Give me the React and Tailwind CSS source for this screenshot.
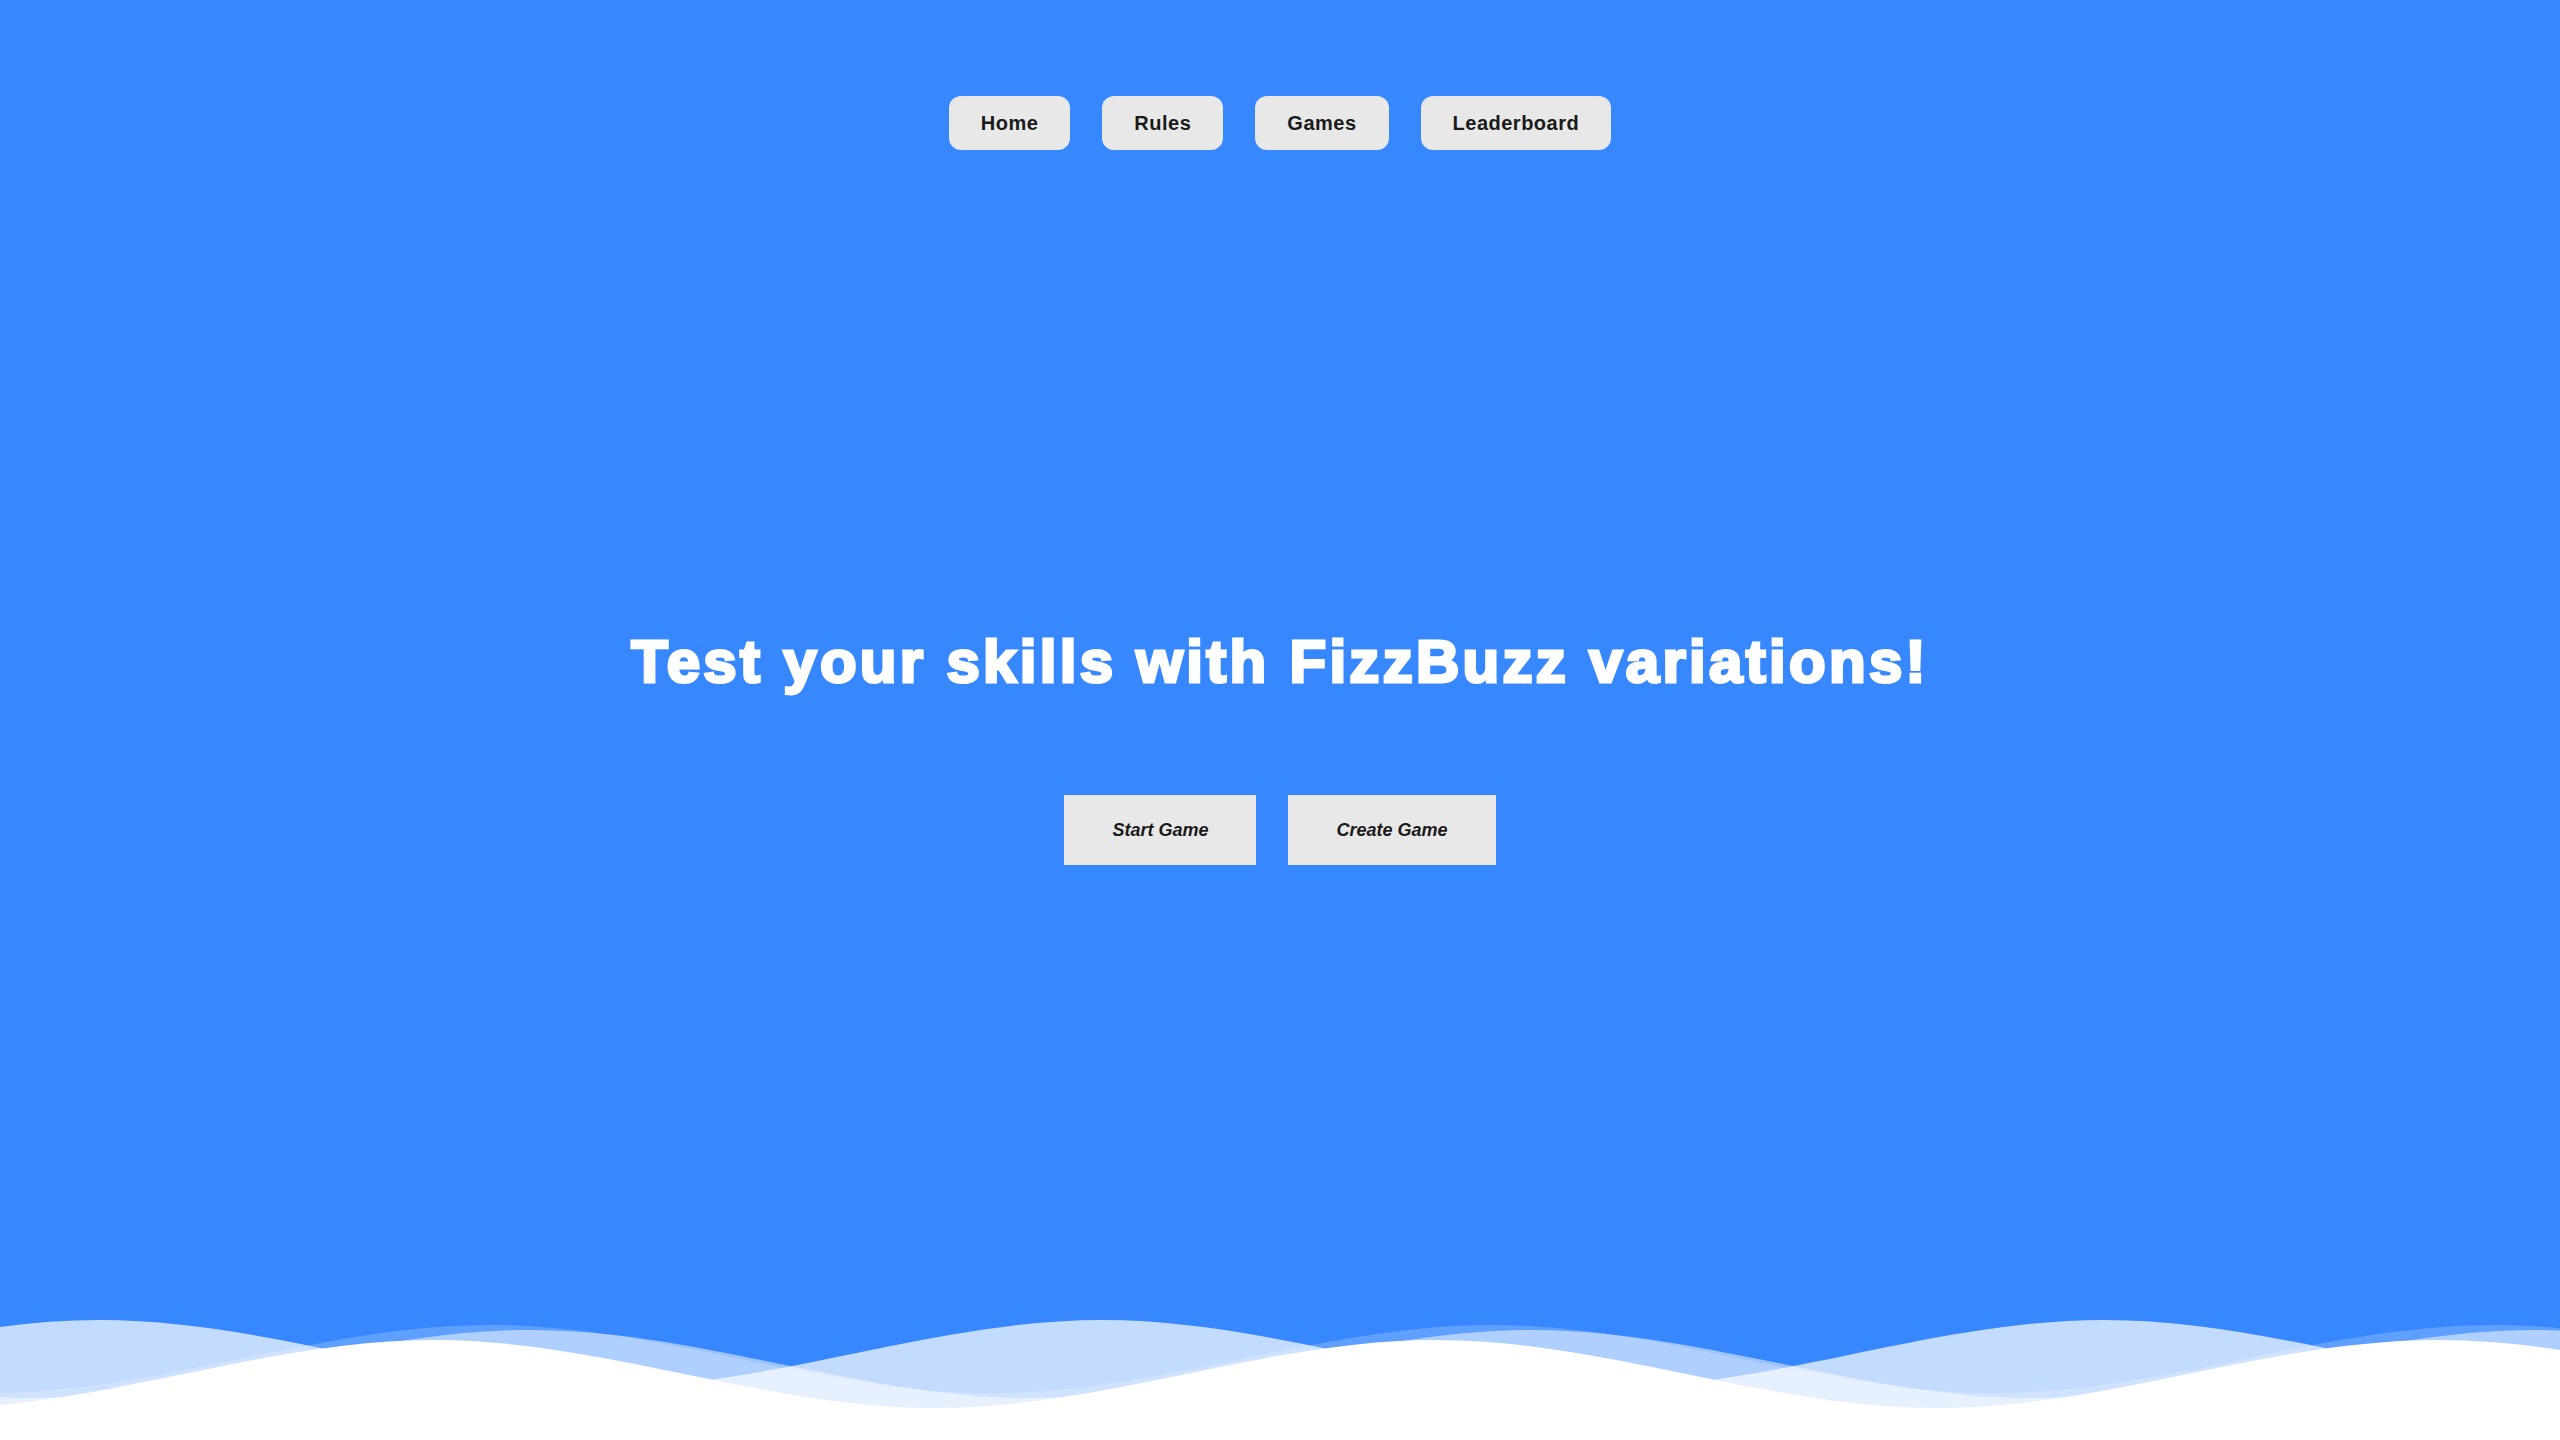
import React from "react";

const HALF = 501;
const AMP = 68;

// builds one layer of the wave band, starting from a trough left of the page
const wavePath = (crest, top) => {
  const a = (30 / 88) * HALF;
  const b = (58 / 88) * HALF;
  let x = crest - HALF;
  while (x > -HALF) x -= 2 * HALF;
  const start = x;
  let d = `M${start} ${top + AMP}`;
  let up = true;
  while (x < 2560 + HALF) {
    const dy = up ? -AMP : AMP;
    d += ` c${a.toFixed(1)} 0 ${b.toFixed(1)} ${dy} ${HALF} ${dy}`;
    x += HALF;
    up = !up;
  }
  d += ` V1440 H${start} Z`;
  return d;
};

const layers = [
  { crest: 100, top: 1320, fill: "rgba(255,255,255,0.7)" },
  { crest: 530, top: 1330, fill: "rgba(255,255,255,0.5)" },
  { crest: 490, top: 1325, fill: "rgba(255,255,255,0.2)" },
  { crest: 434, top: 1340, fill: "#ffffff" },
];

const navItems = ["Home", "Rules", "Games", "Leaderboard"];

const Waves = () => (
  <svg
    className="block w-full h-[130px] mt-auto"
    viewBox="0 1310 2560 130"
    preserveAspectRatio="none"
  >
    {layers.map((l, i) => (
      <path key={i} d={wavePath(l.crest, l.top)} fill={l.fill} />
    ))}
  </svg>
);

export default function App() {
  return (
    <div className="min-h-screen flex flex-col bg-[#3787ff] overflow-hidden font-['Liberation_Sans',Arial,sans-serif]">
      {/* top navigation */}
      <nav className="pt-[96px] flex justify-center gap-8">
        {navItems.map((item) => (
          <button
            key={item}
            className="h-[54px] px-8 flex items-center rounded-xl bg-[#e8e8e8] text-[20px] font-bold tracking-[0.5px] text-[#1a1a1a]"
          >
            {item}
          </button>
        ))}
      </nav>

      {/* hero */}
      <main className="flex flex-col items-center">
        <h1 className="mt-[482px] text-[60px] leading-none font-bold tracking-[3.3px] text-white [-webkit-text-stroke:3px_white]">
          Test your skills with FizzBuzz variations!
        </h1>
        <div className="mt-[103px] flex gap-8">
          <button className="h-[70px] px-12 flex items-center bg-[#e8e8e8] text-[18px] font-bold italic text-[#1a1a1a]">
            Start Game
          </button>
          <button className="h-[70px] px-12 flex items-center bg-[#e8e8e8] text-[18px] font-bold italic text-[#1a1a1a]">
            Create Game
          </button>
        </div>
      </main>

      <Waves />
    </div>
  );
}
